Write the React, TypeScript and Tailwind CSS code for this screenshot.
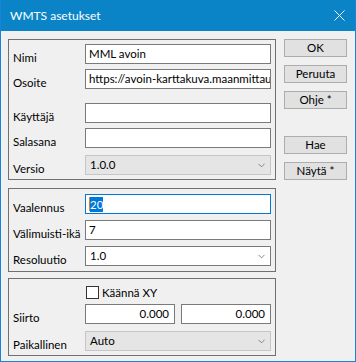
import { ChevronDown } from 'lucide-react'

/** Tekstikenttä (Windows-tyylinen). */
function Field({
  value = '',
  className = '',
  focused = false,
  right = false,
}: {
  value?: string
  className?: string
  focused?: boolean
  right?: boolean
}) {
  return (
    <div
      className={`h-[20px] bg-white border flex items-center overflow-hidden whitespace-nowrap ${
        focused ? 'border-[#0078d7]' : 'border-[#7a7a7a]'
      } ${right ? 'justify-end pr-[5px]' : 'pl-[3px]'} ${className}`}
    >
      {focused ? (
        <span className="flex items-center">
          <span className="w-[1px] h-[14px] bg-[#e07b2a]" />
          <span className="bg-[#0078d7] text-white leading-[15px]">{value}</span>
        </span>
      ) : (
        value
      )}
    </div>
  )
}

/** Pudotusvalikko. */
function Select({ value, disabled = false }: { value: string; disabled?: boolean }) {
  return (
    <div
      className={`h-[20px] w-[186px] border flex items-center justify-between pl-[4px] pr-[3px] ${
        disabled ? 'bg-[#e5e5e5] border-[#c6c6c6]' : 'bg-white border-[#7a7a7a]'
      }`}
    >
      <span>{value}</span>
      <ChevronDown className="w-[11px] h-[11px] text-[#555]" strokeWidth={1.5} />
    </div>
  )
}

function Row({
  label,
  children,
  mt,
}: {
  label: string
  children: React.ReactNode
  mt: string
}) {
  return (
    <div className={`flex items-start h-[20px] shrink-0 ${mt}`}>
      <div className="w-[76px] h-[20px] pl-[4px] leading-[27px] whitespace-nowrap">{label}</div>
      {children}
    </div>
  )
}

function Btn({ label, className = '' }: { label: string; className?: string }) {
  return (
    <div
      className={`h-[18px] w-[63px] bg-[#e1e1e1] border border-[#adadad] flex items-center justify-center ${className}`}
    >
      {label}
    </div>
  )
}

export default function App() {
  return (
    <div className="w-[356px] h-[362px] flex flex-col bg-[#f0f0f0] border-x border-b border-[#1883d7] font-['Lato','DejaVu_Sans',sans-serif] text-[11.5px] text-black overflow-hidden">
      {/* Otsikkopalkki */}
      <div className="h-[31px] shrink-0 bg-[#0b84c7] -mx-[1px] flex items-center justify-between pl-[10px] pr-[10px] text-white">
        <span className="text-[12px]">WMTS asetukset</span>
        <svg width="11" height="11" viewBox="0 0 11 11" className="mr-[1px]">
          <path d="M0.5 0.5L10.5 10.5M10.5 0.5L0.5 10.5" stroke="white" strokeWidth="1" />
        </svg>
      </div>

      <div className="flex pl-[7px] pt-[8px]">
        {/* Vasen sarake: ryhmät */}
        <div className="w-[268px] flex flex-col">
          <div className="border border-[#707070] h-[141px] flex flex-col">
            <Row label="Nimi" mt="mt-[4px]">
              <Field value="MML avoin" className="w-[186px]" />
            </Row>
            <Row label="Osoite" mt="mt-[5px]">
              <Field value="https://avoin-karttakuva.maanmittau" className="w-[186px]" />
            </Row>
            <Row label="Käyttäjä" mt="mt-[14px]">
              <Field className="w-[186px]" />
            </Row>
            <Row label="Salasana" mt="mt-[5px]">
              <Field className="w-[186px]" />
            </Row>
            <Row label="Versio" mt="mt-[7px]">
              <Select value="1.0.0" disabled />
            </Row>
          </div>

          <div className="border border-[#707070] h-[84px] mt-[8px] flex flex-col">
            <Row label="Vaalennus" mt="mt-[5px]">
              <Field value="20" focused className="w-[186px]" />
            </Row>
            <Row label="Välimuisti-ikä" mt="mt-[6px]">
              <Field value="7" className="w-[186px]" />
            </Row>
            <Row label="Resoluutio" mt="mt-[6px]">
              <Select value="1.0" />
            </Row>
          </div>

          <div className="border border-[#707070] h-[78px] mt-[6px] flex flex-col">
            <div className="flex items-center mt-[7px] pl-[77px] h-[13px]">
              <div className="w-[13px] h-[13px] border border-[#333] bg-white" />
              <span className="ml-[3px] leading-[13px]">Käännä XY</span>
            </div>
            <Row label="Siirto" mt="mt-[5px]">
              <Field value="0.000" right className="w-[90px]" />
              <Field value="0.000" right className="w-[90px] ml-[6px]" />
            </Row>
            <Row label="Paikallinen" mt="mt-[7px]">
              <Select value="Auto" disabled />
            </Row>
          </div>
        </div>

        {/* Oikea sarake: painikkeet */}
        <div className="ml-[8px] flex flex-col">
          <Btn label="OK" />
          <Btn label="Peruuta" className="mt-[8px]" />
          <Btn label="Ohje *" className="mt-[8px]" />
          <Btn label="Hae" className="mt-[27px]" />
          <Btn label="Näytä *" className="mt-[8px]" />
        </div>
      </div>
    </div>
  )
}
